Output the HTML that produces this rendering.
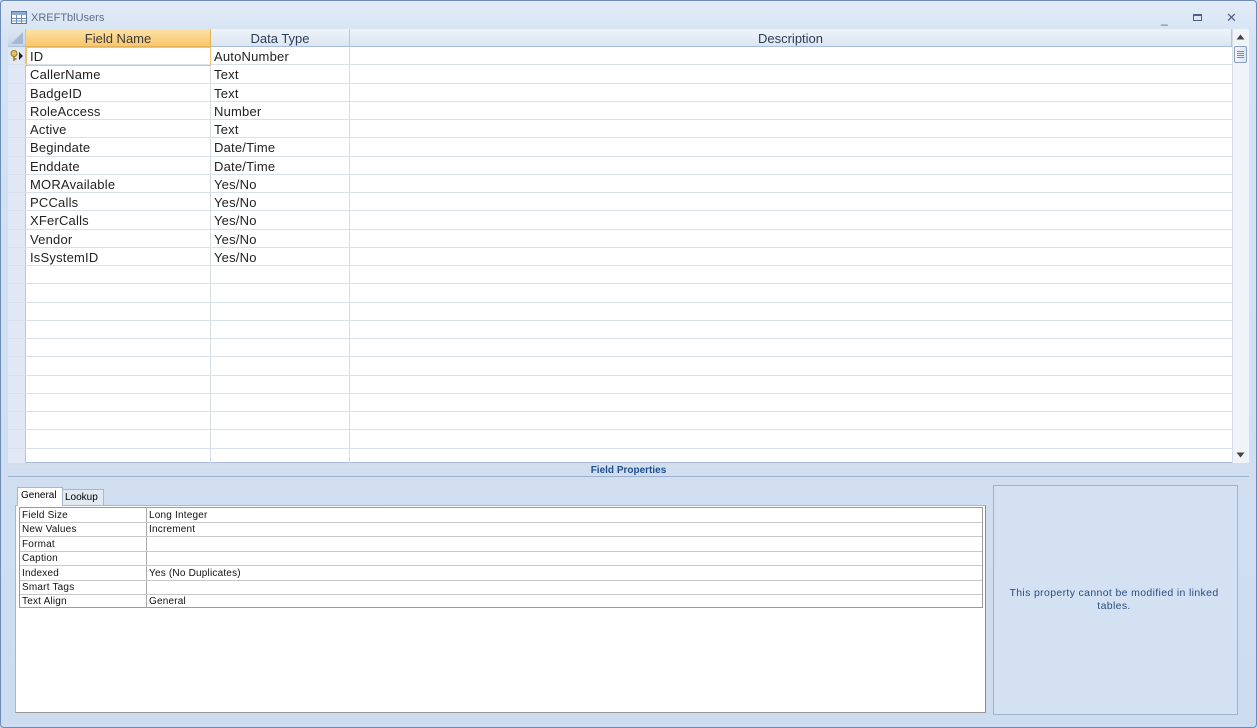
<!DOCTYPE html>
<html><head><meta charset="utf-8"><style>
*{margin:0;padding:0;box-sizing:border-box}
body{width:1257px;height:728px;overflow:hidden;background:#c5d7ee;font-family:"Liberation Sans",sans-serif;position:relative}
.a{position:absolute}
#frame{left:0;top:0;width:1257px;height:728px;border:1px solid #6d8bb8;border-radius:4px;background:linear-gradient(#e3ecf7,#d4e2f3 40px,#cddcef)}
.hd{top:29px;height:18px;font-size:13px;color:#2c3e55;text-align:center;line-height:20px;background:linear-gradient(#eef3f9,#dbe6f3);border-right:1px solid #b6c8de;border-bottom:1px solid #a9bdd6}
.cell{font-size:13px;color:#222;line-height:20px;white-space:nowrap;padding-left:4px;letter-spacing:0.2px}
.pr{font-size:10px;color:#111;line-height:15px;padding-left:3px;white-space:nowrap;letter-spacing:0.2px}
</style></head><body>
<div class="a" id="frame"></div>
<svg class="a" style="left:11px;top:11px" width="16" height="13"><rect x="0.5" y="0.5" width="15" height="12" fill="#fff" stroke="#5a78a8"/><rect x="1" y="1" width="14" height="3" fill="#8fa9cf"/><path d="M1 7.5H15M1 10H15M5.5 4V12M10.5 4V12" stroke="#6f8cbb" stroke-width="1"/></svg>
<div class="a" style="left:31px;top:12px;font-size:11px;color:#5a6e8c">XREFTblUsers</div>
<div class="a" style="left:1161px;top:12px;font-size:12px;color:#4d6185">_</div>
<div class="a" style="left:1193px;top:14px;width:9px;height:7px;border:1px solid #4d6185;border-top-width:2px"></div>
<div class="a" style="left:1226px;top:10px;font-size:13px;color:#4d6185">✕</div>
<div class="a" style="left:8px;top:29px;width:1241px;height:434px;background:#fff;border-bottom:1px solid #a9bdd6"></div>
<div class="a" style="left:8px;top:47px;width:18px;height:416px;background:#dfe8f4;border-right:1px solid #b6c8de"></div>
<div class="a hd" style="left:8px;width:18px;background:linear-gradient(#dce6f3,#c6d6ea)"></div>
<svg class="a" style="left:11px;top:31px" width="13" height="14"><path d="M12 1V13H0Z" fill="#a5b9d5"/></svg>
<div class="a hd" style="left:26px;width:185px;background:linear-gradient(#fde3a5,#f9c66d);border-color:#e6b255;color:#3b3b3b">Field Name</div>
<div class="a hd" style="left:211px;width:139px">Data Type</div>
<div class="a hd" style="left:350px;width:882px">Description</div>
<div class="a" style="left:210px;top:47px;width:1px;height:416px;background:#d2dce8"></div>
<div class="a" style="left:349px;top:47px;width:1px;height:416px;background:#d2dce8"></div>
<div id="rows"></div>
<div class="a" style="left:1232px;top:29px;width:17px;height:434px;background:#f0f3f8;border-left:1px solid #d5dde8"></div>
<svg class="a" style="left:1236px;top:34px" width="9" height="6"><path d="M0.5 5.5L4.5 0.5L8.5 5.5Z" fill="#444"/></svg>
<div class="a" style="left:1234px;top:46px;width:13px;height:17px;border:1px solid #8ca0bd;border-radius:2px;background:linear-gradient(90deg,#f4f7fb,#dbe4ef)"></div>
<svg class="a" style="left:1237px;top:50px" width="7" height="9"><path d="M0 1.5H7M0 3.5H7M0 5.5H7M0 7.5H7" stroke="#7a8ca8"/></svg>
<svg class="a" style="left:1236px;top:452px" width="9" height="6"><path d="M0.5 0.5L4.5 5.5L8.5 0.5Z" fill="#444"/></svg>
<div class="a" style="left:8px;top:463px;width:1241px;height:14px;border-bottom:1px solid #9ab0cc;font-size:10px;color:#1f4f8f;text-align:center;line-height:15px;font-weight:bold">Field Properties</div>
<div class="a" style="left:17px;top:487px;width:46px;height:19px;background:#fff;border:1px solid #a6b7cc;border-bottom:none;font-size:10px;line-height:16px;padding-left:3px;z-index:2">General</div>
<div class="a" style="left:62px;top:489px;width:42px;height:17px;background:#e1e9f3;border:1px solid #a6b7cc;font-size:10px;line-height:16px;padding-left:2px">Lookup</div>
<div class="a" style="left:15px;top:505px;width:971px;height:208px;background:#fff;border:1px solid #a6b7cc;border-right-color:#889;border-bottom-color:#999"></div>
<div class="a" style="left:19px;top:507px;width:964px;height:101px;border:1px solid #9a9a9a"></div>
<div class="a" style="left:146px;top:507px;width:1px;height:101px;background:#aaa"></div>
<div id="props"></div>
<div class="a" style="left:993px;top:485px;width:245px;height:230px;border:1px solid #9fb3cf;background:#d3e1f2"></div>
<div class="a" style="left:1005px;top:587px;width:218px;font-size:10.5px;color:#2a4d80;text-align:center;line-height:13px;letter-spacing:0.35px">This property cannot be modified in linked tables.</div>
<script>
var f=[["ID","AutoNumber"],["CallerName","Text"],["BadgeID","Text"],["RoleAccess","Number"],["Active","Text"],["Begindate","Date/Time"],["Enddate","Date/Time"],["MORAvailable","Yes/No"],["PCCalls","Yes/No"],["XFerCalls","Yes/No"],["Vendor","Yes/No"],["IsSystemID","Yes/No"]];
var h="";
for(var i=0;i<23;i++){var y=47+i*18.25;
h+='<div class="a" style="left:8px;top:'+(y+17.25)+'px;width:1224px;height:1px;background:#d8e0ea"></div>';
if(f[i]){h+='<div class="a cell" style="left:26px;top:'+y+'px">'+f[i][0]+'</div><div class="a cell" style="left:210px;top:'+y+'px">'+f[i][1]+'</div>';}}
h+='<div class="a" style="left:26px;top:47px;width:185px;height:19px;border:1px solid #f0c27a"></div>';
h+='<svg class="a" style="left:10px;top:50px" width="14" height="12"><circle cx="4" cy="3.5" r="3" fill="#e9c25a" stroke="#9b7a20"/><path d="M4 6.5V11M4 9H6.5" stroke="#9b7a20" stroke-width="1.5"/><path d="M9 2L13 6L9 10Z" fill="#222"/></svg>';
document.getElementById("rows").innerHTML=h;
var p=[["Field Size","Long Integer"],["New Values","Increment"],["Format",""],["Caption",""],["Indexed","Yes (No Duplicates)"],["Smart Tags",""],["Text Align","General"]];
h="";for(var i=0;i<7;i++){var y=508+i*14.4;
h+='<div class="a pr" style="left:19px;top:'+y+'px">'+p[i][0]+'</div><div class="a pr" style="left:146px;top:'+y+'px">'+p[i][1]+'</div>';
if(i<6)h+='<div class="a" style="left:20px;top:'+(y+14)+'px;width:962px;height:1px;background:#c8c8c8"></div>';}
document.getElementById("props").innerHTML=h;
</script>
</body></html>
